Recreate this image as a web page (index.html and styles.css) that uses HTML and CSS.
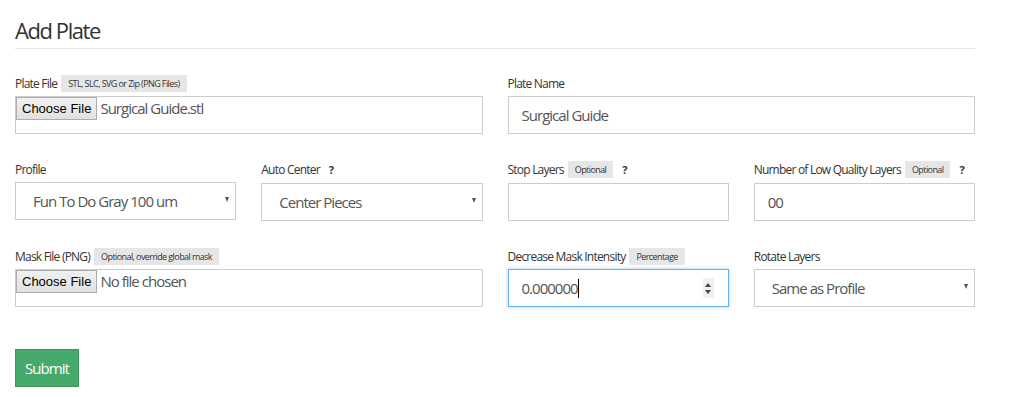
FILE: index.html
```html
<!DOCTYPE html>
<html lang="en">
<head>
    <meta charset="UTF-8">
    <meta name="viewport" content="width=device-width, initial-scale=1.0">
    <title>Add Plate</title>
    <link rel="stylesheet" href="styles.css">
</head>
<body>
    <div class="container">
        <h1>Add Plate</h1>

        <form id="plate-form" class="grid">
            <div class="field half">
                <div class="label">Plate File <span class="badge">STL, SLC, SVG or Zip (PNG Files)</span></div>
                <div class="file-box">
                    <span class="file-btn">Choose File</span>
                    <span class="file-name">Surgical Guide.stl</span>
                </div>
            </div>
            <div class="field half">
                <div class="label">Plate Name</div>
                <input class="control" type="text" value="Surgical Guide">
            </div>

            <div class="field">
                <div class="label">Profile</div>
                <div class="select-wrap">
                    <select class="control select">
                        <option>Fun To Do Gray 100 um</option>
                    </select>
                </div>
            </div>
            <div class="field">
                <div class="label with-help">Auto Center <span class="help">?</span></div>
                <div class="select-wrap">
                    <select class="control select">
                        <option>Center Pieces</option>
                    </select>
                </div>
            </div>
            <div class="field">
                <div class="label with-help">Stop Layers <span class="badge">Optional</span> <span class="help">?</span></div>
                <input class="control" type="text" value="">
            </div>
            <div class="field">
                <div class="label with-help">Number of Low Quality Layers <span class="badge">Optional</span> <span class="help">?</span></div>
                <input class="control" type="text" value="00">
            </div>

            <div class="field half">
                <div class="label">Mask File (PNG) <span class="badge">Optional, override global mask</span></div>
                <div class="file-box">
                    <span class="file-btn">Choose File</span>
                    <span class="file-name">No file chosen</span>
                </div>
            </div>
            <div class="field">
                <div class="label">Decrease Mask Intensity <span class="badge">Percentage</span></div>
                <div class="control number focused">
                    <span class="number-value">0.000000</span><span class="caret"></span>
                    <span class="spinner">
                        <span class="spin-up"></span>
                        <span class="spin-down"></span>
                    </span>
                </div>
            </div>
            <div class="field">
                <div class="label">Rotate Layers</div>
                <div class="select-wrap">
                    <select class="control select">
                        <option>Same as Profile</option>
                    </select>
                </div>
            </div>
        </form>

        <button type="submit" form="plate-form" class="submit">Submit</button>
    </div>
</body>
</html>
```

FILE: styles.css
```css
* {
    letter-spacing: -0.065em;
}

body {
    font-family: "Open Sans", "Noto Sans", sans-serif;
    margin: 0;
    padding: 0;
    background-color: #fff;
    color: #333;
}

.container {
    width: 960px;
    padding: 0 15px;
}

h1 {
    font-size: 22px;
    font-weight: 400;
    line-height: 26px;
    margin: 0;
    padding: 17px 0 5px;
    border-bottom: 1px solid #e5e5e5;
}

.grid {
    display: grid;
    grid-template-columns: repeat(4, minmax(0, 1fr));
    column-gap: 25px;
    row-gap: 27px;
    margin-top: 26px;
}

.field.half {
    grid-column: span 2;
}

.label {
    display: flex;
    align-items: center;
    gap: 4px;
    height: 16px;
    margin-bottom: 5px;
    font-size: 12px;
    white-space: nowrap;
}

.label.with-help {
    height: 17px;
}

.badge {
    background-color: #e6e6e6;
    font-size: 9px;
    padding: 0 7px;
    height: 17px;
    line-height: 17px;
}

.help {
    font-weight: 700;
    font-size: 11px;
    margin-left: 5px;
}

.control {
    display: block;
    box-sizing: border-box;
    width: 100%;
    height: 38px;
    border: 1px solid #ccc;
    padding: 0 13px;
    font-family: inherit;
    font-size: 15px;
    color: #555;
    background: #fff;
    border-radius: 0;
    outline: none;
}

.select-wrap {
    position: relative;
}

.select {
    appearance: none;
    -webkit-appearance: none;
    padding-left: 17px;
}

.select-wrap::after {
    content: "";
    position: absolute;
    right: 7px;
    top: 15px;
    border-left: 2.5px solid transparent;
    border-right: 2.5px solid transparent;
    border-top: 5px solid #555;
}

.file-box {
    box-sizing: border-box;
    height: 38px;
    border: 1px solid #ccc;
    display: flex;
    align-items: flex-start;
    gap: 3px;
}

.file-btn {
    font-family: "Liberation Sans", Arial, sans-serif;
    letter-spacing: normal;
    font-size: 13px;
    color: #000;
    height: 23px;
    line-height: 21px;
    box-sizing: border-box;
    padding: 0 5px;
    border: 1px solid #adadad;
    background: linear-gradient(#f0f0f0, #e1e1e1);
}

.file-name {
    font-size: 15px;
    color: #555;
    line-height: 22px;
}

.number {
    display: flex;
    align-items: center;
}

.number.focused {
    border-color: #66afe9;
    box-shadow: 0 0 4px rgba(102, 175, 233, 0.6);
}

.number-value {
    color: #555;
}

.caret {
    width: 1px;
    height: 19px;
    background: #000;
}

.spinner {
    margin-left: auto;
    margin-right: 1px;
    width: 11px;
    height: 20px;
    background: #f0f0f0;
    display: flex;
    flex-direction: column;
    align-items: center;
    justify-content: center;
    gap: 3px;
}

.spin-up {
    border-left: 3px solid transparent;
    border-right: 3px solid transparent;
    border-bottom: 4px solid #444;
}

.spin-down {
    border-left: 3px solid transparent;
    border-right: 3px solid transparent;
    border-top: 4px solid #444;
}

.submit {
    margin-top: 42px;
    height: 38px;
    width: 64px;
    padding: 0;
    background-color: #44a96b;
    border: 1px solid #3a9a5e;
    color: #fff;
    font-family: inherit;
    font-size: 15px;
    cursor: pointer;
}

.submit:hover {
    background-color: #3c9a5f;
}
```
